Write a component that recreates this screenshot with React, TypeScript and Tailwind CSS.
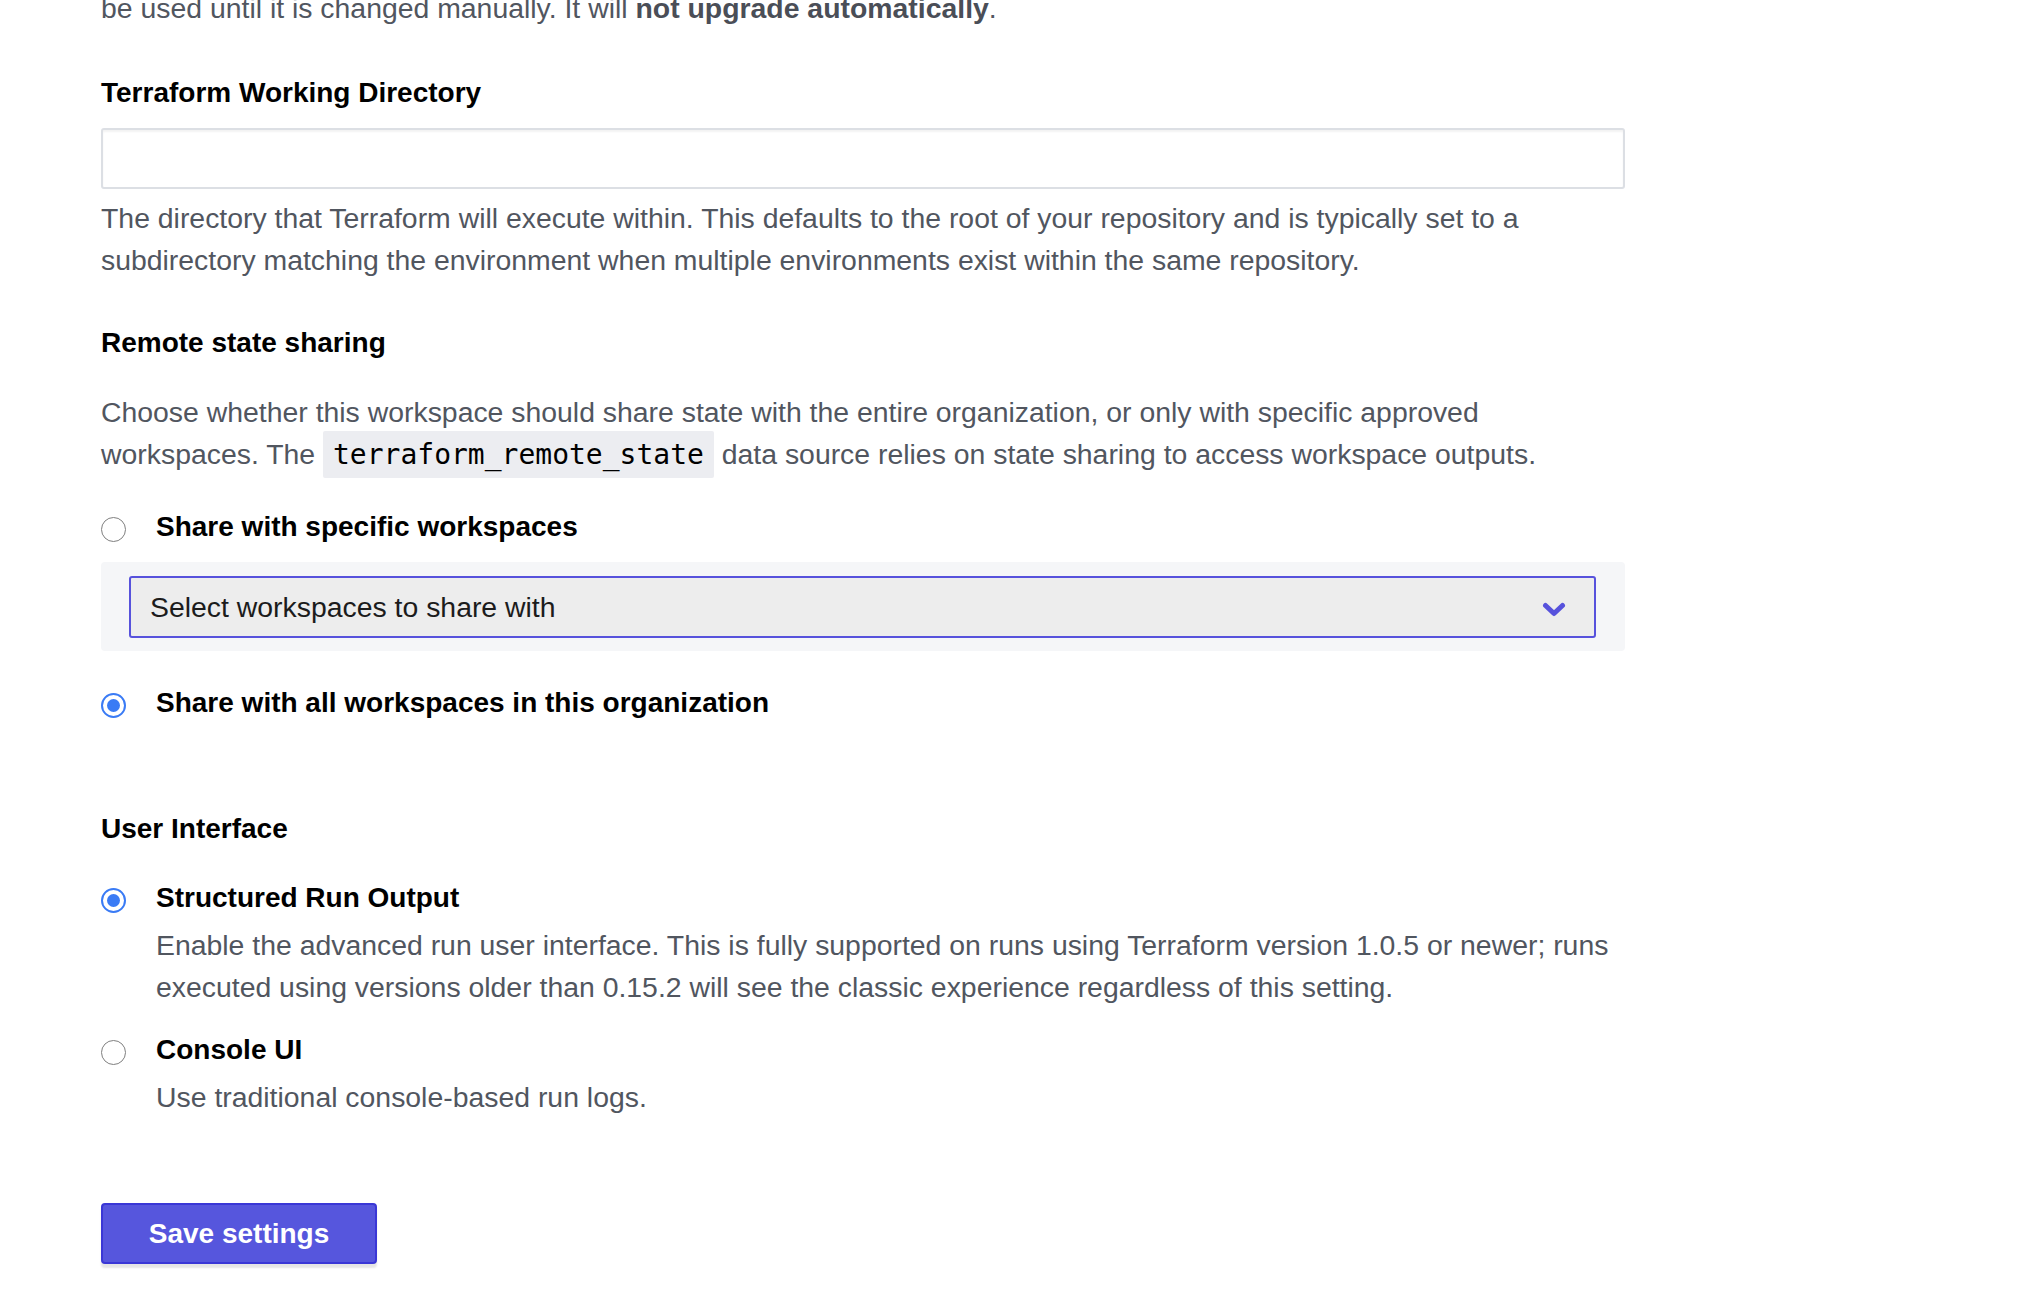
import React from "react";

const font = { fontFamily: '"Liberation Sans", Arial, sans-serif' };

const Radio = ({ checked }: { checked?: boolean }) =>
  checked ? (
    <span className="mt-[11px] flex h-[25px] w-[25px] shrink-0 items-center justify-center rounded-full border-2 border-[#3a7bf5] bg-white">
      <span className="h-[13px] w-[13px] rounded-full bg-[#3a7bf5]" />
    </span>
  ) : (
    <span className="mt-[11px] block h-[25px] w-[25px] shrink-0 rounded-full border-[1.5px] border-[#7f7f7f] bg-white" />
  );

const Option = ({
  label,
  checked,
  children,
  className = "",
}: {
  label: string;
  checked?: boolean;
  children?: React.ReactNode;
  className?: string;
}) => (
  <div className={`flex items-start ${className}`}>
    <div className="w-[55px] shrink-0">
      <Radio checked={checked} />
    </div>
    <div className="flex-1">
      <div className="text-[28px] font-bold leading-[42px] text-black">{label}</div>
      {children}
    </div>
  </div>
);

export default function App() {
  return (
    <div className="min-h-screen bg-white" style={font}>
      <div className="w-[1625px] pl-[101px]">
        {/* tail of previous section */}
        <p className="-mt-[13px] text-[28.4px] leading-[42px] text-[#51565f]">
          be used until it is changed manually. It will{" "}
          <strong className="font-bold text-[#4a4e57]">not upgrade automatically</strong>.
        </p>

        {/* Working directory */}
        <h3 className="mt-[43px] text-[28px] font-bold leading-[42px] text-black">
          Terraform Working Directory
        </h3>
        <input
          type="text"
          className="mt-[14px] block h-[61px] w-full rounded-[3px] border-2 border-[#dcdfe4] bg-white px-4 text-[28px] shadow-[inset_0_2px_2px_rgba(0,0,0,0.05)] outline-none"
        />
        <p className="mt-[8px] text-[28.4px] leading-[42px] text-[#51565f]">
          The directory that Terraform will execute within. This defaults to the root of your repository and is typically set to a
          subdirectory matching the environment when multiple environments exist within the same repository.
        </p>

        {/* Remote state sharing */}
        <h3 className="mt-[41px] text-[28px] font-bold leading-[42px] text-black">
          Remote state sharing
        </h3>
        <p className="mt-[27px] text-[28.4px] leading-[42px] text-[#51565f]">
          Choose whether this workspace should share state with the entire organization, or only with specific approved
          workspaces. The{" "}
          <code
            className="rounded-[2px] bg-[#ecedf1] px-[10px] py-[7px] text-[28px] text-black"
            style={{ fontFamily: '"DejaVu Sans Mono", "Liberation Mono", monospace' }}
          >
            terraform_remote_state
          </code>{" "}
          data source relies on state sharing to access workspace outputs.
        </p>

        <Option label="Share with specific workspaces" className="mt-[30px]" />
        <div className="mt-[14px] rounded-[4px] bg-[#f5f6f8] pb-[13px] pl-[28px] pr-[29px] pt-[14px]">
          <div className="flex h-[62px] items-center justify-between rounded-[3px] border-2 border-[#5752dc] bg-[#ededed] pl-[19px] pr-[28px]">
            <span className="text-[28.4px] text-[#1c1c1c]">Select workspaces to share with</span>
            <svg width="24" height="16" viewBox="0 0 24 16" fill="none" className="mt-[5px]">
              <path
                d="M3.5 3.5 L12 11.5 L20.5 3.5"
                stroke="#5752dc"
                strokeWidth="5"
                strokeLinecap="round"
                strokeLinejoin="round"
              />
            </svg>
          </div>
        </div>
        <Option label="Share with all workspaces in this organization" checked className="mt-[31px]" />

        {/* User interface */}
        <h3 className="mt-[84px] text-[28px] font-bold leading-[42px] text-black">User Interface</h3>
        <Option label="Structured Run Output" checked className="mt-[27px]">
          <p className="mt-[5px] text-[28.4px] leading-[42px] text-[#51565f]">
            Enable the advanced run user interface. This is fully supported on runs using Terraform version 1.0.5 or newer; runs
            executed using versions older than 0.15.2 will see the classic experience regardless of this setting.
          </p>
        </Option>
        <Option label="Console UI" className="mt-[21px]">
          <p className="mt-[5px] text-[28.4px] leading-[42px] text-[#51565f]">
            Use traditional console-based run logs.
          </p>
        </Option>

        <button className="mt-[85px] flex h-[61px] w-[276px] items-center justify-center rounded-[4px] border-2 border-[#3a37d6] bg-[#5656dd] text-[28px] font-bold text-white shadow-[0_4px_2px_rgba(0,0,0,0.1)]">
          Save settings
        </button>
      </div>
    </div>
  );
}
